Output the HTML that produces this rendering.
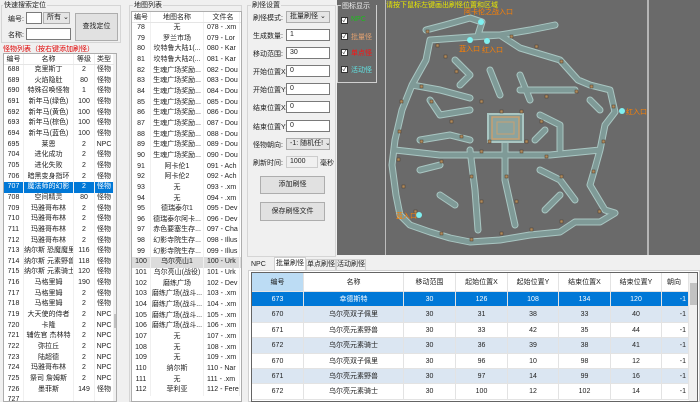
<!DOCTYPE html>
<html><head><meta charset="utf-8">
<style>
*{box-sizing:border-box;margin:0;padding:0}
body{width:700px;height:402px;overflow:hidden;background:#f0f0f0;font-family:"Liberation Sans","Noto Sans CJK SC",sans-serif;font-size:7px;color:#222;position:relative}
.a{position:absolute;white-space:nowrap}
.in{position:absolute;background:#fff;border:1px solid #7a7a7a;font-size:7px;padding:0 3px;line-height:10px;overflow:hidden;white-space:nowrap}
.sel{position:absolute;background:#e5e5e5;border:1px solid #adadad;font-size:7px;padding:0 3px;line-height:10px;overflow:hidden;white-space:nowrap}
.btn{position:absolute;background:#e1e1e1;border:1px solid #adadad;text-align:center;font-size:7px}
.grp{position:absolute;border:1px solid #d5d5d5}
.gt{position:absolute;background:#f0f0f0;padding:0 1px;font-size:7px;line-height:9px}
.r{display:flex;height:10.67px;line-height:10.67px;overflow:hidden}
.r span{display:block;text-align:center;white-space:nowrap;overflow:hidden;border-right:1px solid #f0f0f0;flex:none}
.h{height:11px;line-height:11px;border-bottom:1px solid #e5e5e5}
.s{background:#0078d7;color:#fff}
.g{background:#dcdcdc}
.L span:nth-child(1){width:20px}.L span:nth-child(2){width:50px}.L span:nth-child(3){width:21px}.L span:nth-child(4){width:19px}
.M span:nth-child(1){width:19px}.M span:nth-child(2){width:53px}.M span:nth-child(3){width:36px;text-align:left;padding-left:3px}
.B .r{height:15.4px;line-height:15.4px;border-bottom:1px solid #e3e3e3}
.B .r span{border-right:1px solid #e3e3e3}
.B .o{background:#dbe6f2}
.B span:nth-child(1){width:52px}.B span:nth-child(2){width:100px}.B span:nth-child(3){width:52px}.B span:nth-child(4){width:52px}.B span:nth-child(5){width:51px}.B span:nth-child(6){width:52px}.B span:nth-child(7){width:51px}.B span:nth-child(8){width:27px;text-align:right;padding-right:2px}
.cb{position:absolute;width:7px;height:7px;background:#fff;border:1px solid #333;font-size:6px;line-height:6px;text-align:center;color:#111}
</style></head><body>

<div class="grp" style="left:1px;top:5px;width:120px;height:38px"></div>
<div class="gt" style="left:3px;top:1px">快速搜索定位</div>
<div class="a" style="left:8px;top:14px">编号:</div>
<div class="in" style="left:26px;top:12px;width:16px;height:12px"></div>
<div class="sel" style="left:43px;top:12px;width:27px;height:12px">所有 ⌄</div>
<div class="a" style="left:8px;top:30px">名称:</div>
<div class="in" style="left:26px;top:28px;width:45px;height:12px"></div>
<div class="btn" style="left:75px;top:13px;width:43px;height:28px;line-height:26px">查找定位</div>
<div class="a" style="left:3px;top:44px;color:#e00000">怪物列表（按右键添加刷怪）</div>
<div class="a L" style="left:3px;top:53px;width:114px;height:349px;background:#fff;border:1px solid #adadad;overflow:hidden">
<div class="r h"><span>编号</span><span>名称</span><span>等级</span><span>类型</span></div>
<div class="r"><span>688</span><span>克里斯丁</span><span>2</span><span>怪物</span></div>
<div class="r"><span>689</span><span>火焰隐肚</span><span>80</span><span>怪物</span></div>
<div class="r"><span>690</span><span>特殊召唤怪物</span><span>1</span><span>怪物</span></div>
<div class="r"><span>691</span><span>新年马(绿色)</span><span>100</span><span>怪物</span></div>
<div class="r"><span>692</span><span>新年马(黄色)</span><span>100</span><span>怪物</span></div>
<div class="r"><span>693</span><span>新年马(棕色)</span><span>100</span><span>怪物</span></div>
<div class="r"><span>694</span><span>新年马(蓝色)</span><span>100</span><span>怪物</span></div>
<div class="r"><span>695</span><span>莱恩</span><span>2</span><span>NPC</span></div>
<div class="r"><span>704</span><span>进化成功</span><span>2</span><span>怪物</span></div>
<div class="r"><span>705</span><span>进化失败</span><span>2</span><span>怪物</span></div>
<div class="r"><span>706</span><span>暗黑变身指环</span><span>2</span><span>怪物</span></div>
<div class="r s"><span>707</span><span>魔法师的幻影</span><span>2</span><span>怪物</span></div>
<div class="r"><span>708</span><span>空间精灵</span><span>80</span><span>怪物</span></div>
<div class="r"><span>709</span><span>玛雅哥布林</span><span>2</span><span>怪物</span></div>
<div class="r"><span>710</span><span>玛雅哥布林</span><span>2</span><span>怪物</span></div>
<div class="r"><span>711</span><span>玛雅哥布林</span><span>2</span><span>怪物</span></div>
<div class="r"><span>712</span><span>玛雅哥布林</span><span>2</span><span>怪物</span></div>
<div class="r"><span>713</span><span>纳尔斯 恐魔魔里</span><span>116</span><span>怪物</span></div>
<div class="r"><span>714</span><span>纳尔斯 元素野兽</span><span>118</span><span>怪物</span></div>
<div class="r"><span>715</span><span>纳尔斯 元素骑士</span><span>120</span><span>怪物</span></div>
<div class="r"><span>716</span><span>马格里姆</span><span>190</span><span>怪物</span></div>
<div class="r"><span>717</span><span>马格里姆</span><span>2</span><span>怪物</span></div>
<div class="r"><span>718</span><span>马格里姆</span><span>2</span><span>怪物</span></div>
<div class="r"><span>719</span><span>大天使的侍者</span><span>2</span><span>NPC</span></div>
<div class="r"><span>720</span><span>卡隆</span><span>2</span><span>NPC</span></div>
<div class="r"><span>721</span><span>辅佐官 杰林特</span><span>2</span><span>NPC</span></div>
<div class="r"><span>722</span><span>弥拉丘</span><span>2</span><span>NPC</span></div>
<div class="r"><span>723</span><span>陆超德</span><span>2</span><span>NPC</span></div>
<div class="r"><span>724</span><span>玛雅哥布林</span><span>2</span><span>NPC</span></div>
<div class="r"><span>725</span><span>祭司 詹姆斯</span><span>2</span><span>NPC</span></div>
<div class="r"><span>726</span><span>墨菲斯</span><span>149</span><span>怪物</span></div>
<div class="r"><span>727</span><span></span><span></span><span></span></div>
<div class="a" style="left:110px;top:0;width:4px;height:349px;background:#f0f0f0"></div>
<div class="a" style="left:110px;top:260px;width:4px;height:14px;background:#c2c2c2"></div>
</div>

<div class="grp" style="left:129px;top:5px;width:113px;height:397px"></div>
<div class="gt" style="left:133px;top:1px">地图列表</div>
<div class="a M" style="left:131px;top:11px;width:111px;height:391px;background:#fff;border:1px solid #adadad;overflow:hidden">
<div class="r h"><span>编号</span><span>地图名称</span><span style="text-align:center">文件名</span></div>
<div class="r"><span>78</span><span>无</span><span>078 - .xm</span></div>
<div class="r"><span>79</span><span>罗兰市场</span><span>079 - Lor</span></div>
<div class="r"><span>80</span><span>坎特鲁大陆1(...</span><span>080 - Kar</span></div>
<div class="r"><span>81</span><span>坎特鲁大陆2(...</span><span>081 - Kar</span></div>
<div class="r"><span>82</span><span>生魂广场奖励...</span><span>082 - Dou</span></div>
<div class="r"><span>83</span><span>生魂广场奖励...</span><span>083 - Dou</span></div>
<div class="r"><span>84</span><span>生魂广场奖励...</span><span>084 - Dou</span></div>
<div class="r"><span>85</span><span>生魂广场奖励...</span><span>085 - Dou</span></div>
<div class="r"><span>86</span><span>生魂广场奖励...</span><span>086 - Dou</span></div>
<div class="r"><span>87</span><span>生魂广场奖励...</span><span>087 - Dou</span></div>
<div class="r"><span>88</span><span>生魂广场奖励...</span><span>088 - Dou</span></div>
<div class="r"><span>89</span><span>生魂广场奖励...</span><span>089 - Dou</span></div>
<div class="r"><span>90</span><span>生魂广场奖励...</span><span>090 - Dou</span></div>
<div class="r"><span>91</span><span>阿卡伦1</span><span>091 - Ach</span></div>
<div class="r"><span>92</span><span>阿卡伦2</span><span>092 - Ach</span></div>
<div class="r"><span>93</span><span>无</span><span>093 - .xm</span></div>
<div class="r"><span>94</span><span>无</span><span>094 - .xm</span></div>
<div class="r"><span>95</span><span>德瑞泰尔1</span><span>095 - Dev</span></div>
<div class="r"><span>96</span><span>德瑞泰尔阿卡...</span><span>096 - Dev</span></div>
<div class="r"><span>97</span><span>赤色要塞生存...</span><span>097 - Cha</span></div>
<div class="r"><span>98</span><span>幻影寺院生存...</span><span>098 - Illus</span></div>
<div class="r"><span>99</span><span>幻影寺院生存...</span><span>099 - Illus</span></div>
<div class="r g"><span>100</span><span>乌尔亮山1</span><span>100 - Urk</span></div>
<div class="r"><span>101</span><span>乌尔亮山(战役)</span><span>101 - Urk</span></div>
<div class="r"><span>102</span><span>磨练广场</span><span>102 - Dev</span></div>
<div class="r"><span>103</span><span>磨练广场(战斗...</span><span>103 - .xm</span></div>
<div class="r"><span>104</span><span>磨练广场(战斗...</span><span>104 - .xm</span></div>
<div class="r"><span>105</span><span>磨练广场(战斗...</span><span>105 - .xm</span></div>
<div class="r"><span>106</span><span>磨练广场(战斗...</span><span>106 - .xm</span></div>
<div class="r"><span>107</span><span>无</span><span>107 - .xm</span></div>
<div class="r"><span>108</span><span>无</span><span>108 - .xm</span></div>
<div class="r"><span>109</span><span>无</span><span>109 - .xm</span></div>
<div class="r"><span>110</span><span>纳尔斯</span><span>110 - Nar</span></div>
<div class="r"><span>111</span><span>无</span><span>111 - .xm</span></div>
<div class="r"><span>112</span><span>菲利亚</span><span>112 - Fere</span></div>
</div>

<div class="grp" style="left:247px;top:5px;width:89px;height:252px"></div>
<div class="gt" style="left:251px;top:1px">刷怪设置</div>
<div class="a" style="left:253px;top:13px">刷怪模式:</div><div class="sel" style="left:286px;top:11px;width:44px;height:12px">批量刷怪 ⌄</div>
<div class="a" style="left:253px;top:31px">生成数量:</div><div class="in" style="left:286px;top:29px;width:44px;height:12px">1</div>
<div class="a" style="left:253px;top:49px">移动范围:</div><div class="in" style="left:286px;top:47px;width:44px;height:12px">30</div>
<div class="a" style="left:253px;top:67px">开始位置X:</div><div class="in" style="left:286px;top:65px;width:44px;height:12px">0</div>
<div class="a" style="left:253px;top:85px">开始位置Y:</div><div class="in" style="left:286px;top:83px;width:44px;height:12px">0</div>
<div class="a" style="left:253px;top:103px">结束位置X:</div><div class="in" style="left:286px;top:101px;width:44px;height:12px">0</div>
<div class="a" style="left:253px;top:122px">结束位置Y:</div><div class="in" style="left:286px;top:120px;width:44px;height:12px">0</div>
<div class="a" style="left:253px;top:140px">怪物朝向:</div><div class="sel" style="left:286px;top:138px;width:44px;height:12px">-1: 随机任! ⌄</div>
<div class="a" style="left:253px;top:158px">刷新时间:</div><div class="in" style="left:286px;top:156px;width:32px;height:12px;background:#f0f0f0;border-color:#ccc">1000</div><div class="a" style="left:320px;top:158px">毫秒</div>
<div class="btn" style="left:260px;top:176px;width:65px;height:18px;line-height:16px">添加刷怪</div>
<div class="btn" style="left:260px;top:202px;width:65px;height:19px;line-height:17px">保存刷怪文件</div>

<div class="a" style="left:337px;top:0;width:363px;height:255px;background:#6a6a6a"></div>
<div class="a" style="left:337px;top:5px;width:40px;height:78px;border:1px solid #d0d0d0;border-top:none"></div>
<div class="a" style="left:337px;top:5px;width:4px;height:1px;background:#d0d0d0"></div>
<div class="a" style="left:342px;top:1px;color:#eee">图标显示</div>
<div class="cb" style="left:341px;top:17px">✓</div><div class="a" style="left:351px;top:16px;color:#19c019">NPC</div>
<div class="cb" style="left:341px;top:33px">✓</div><div class="a" style="left:351px;top:32px;color:#e0a070">批量怪</div>
<div class="cb" style="left:341px;top:49px">✓</div><div class="a" style="left:351px;top:48px;color:#ff1010">单点怪</div>
<div class="cb" style="left:341px;top:66px">✓</div><div class="a" style="left:351px;top:65px;color:#60e0e0">活动怪</div>
<div class="a" style="left:385px;top:0;width:1px;height:255px;background:#bdbdbd"></div>
<div class="a" style="left:647px;top:0;width:2px;height:255px;background:#b5b5b5"></div>
<div class="a" style="left:386px;top:0;color:#e8e800;font-size:7px">请按下鼠标左键画出刷怪位置和区域</div>
<svg class="a" style="left:0;top:0" width="700" height="255">
<defs>
<path id="p" d="M426 30 L445 25 L470 18 L482 22 L478 35 L500 35 L530 30 L555 25 M500 35 L520 48 L560 60 L578 80 L590 85 L610 90 L615 112 L605 125 L600 150 L595 168 L590 185 L605 210 L615 213 L600 222 L575 222 L560 232 L530 235 L500 240 L470 242 L450 238 L430 232 L410 225 L400 215 L396 195 L392 165 L395 140 L402 110 L412 85 L426 60 L430 40 Z M412 85 L440 90 L470 98 M395 150 L440 155 L500 155 L550 155 L600 150 M470 150 L475 190 L478 230 M505 130 L505 180 L515 225 M540 115 L560 125 L560 150 M420 140 L450 135 L470 140 M520 90 L545 90 L575 90 M470 110 L440 115 L430 100 M540 170 L560 180 L575 200 M420 170 L440 165 M490 70 L500 95 M520 75 L530 100 M590 100 L600 110 M455 60 L470 75 L460 85 M545 130 L535 140 M440 195 L455 205 M560 195 L545 210"/>
</defs>
<g fill="none" stroke-linejoin="round" stroke-linecap="round">
<use href="#p" stroke="#a9c6c2" stroke-width="7"/>
<use href="#p" stroke="#7f9a97" stroke-width="5"/>
</g>
<rect x="488" y="114" width="35" height="28" fill="#7f9a97" stroke="#a9c6c2" stroke-width="2"/>
<rect x="492" y="117" width="27" height="22" fill="#8aa39f" stroke="#c8a070" stroke-width="1.5"/>
<rect x="497" y="122" width="17" height="12" fill="none" stroke="#c8a070" stroke-width="1"/>
<g fill="#b08a5c" stroke="#4a3a2a" stroke-width=".5">
<rect x="426" y="30" width="3" height="3"/><rect x="436" y="44" width="3" height="3"/><rect x="444" y="55" width="3" height="3"/><rect x="455" y="70" width="3" height="3"/><rect x="420" y="85" width="3" height="3"/><rect x="400" y="100" width="3" height="3"/><rect x="398" y="130" width="3" height="3"/><rect x="397" y="158" width="3" height="3"/><rect x="402" y="185" width="3" height="3"/><rect x="414" y="210" width="3" height="3"/><rect x="440" y="232" width="3" height="3"/><rect x="470" y="238" width="3" height="3"/><rect x="500" y="232" width="3" height="3"/><rect x="530" y="228" width="3" height="3"/><rect x="560" y="220" width="3" height="3"/><rect x="598" y="210" width="3" height="3"/><rect x="592" y="170" width="3" height="3"/><rect x="602" y="140" width="3" height="3"/><rect x="612" y="105" width="3" height="3"/><rect x="590" y="85" width="3" height="3"/><rect x="560" y="60" width="3" height="3"/><rect x="535" y="45" width="3" height="3"/><rect x="510" y="35" width="3" height="3"/><rect x="450" y="120" width="3" height="3"/><rect x="460" y="135" width="3" height="3"/><rect x="480" y="150" width="3" height="3"/><rect x="520" y="150" width="3" height="3"/><rect x="540" y="120" width="3" height="3"/><rect x="545" y="155" width="3" height="3"/><rect x="470" y="175" width="3" height="3"/><rect x="505" y="175" width="3" height="3"/><rect x="480" y="200" width="3" height="3"/><rect x="515" y="200" width="3" height="3"/><rect x="440" y="160" width="3" height="3"/><rect x="420" y="140" width="3" height="3"/><rect x="560" y="175" width="3" height="3"/><rect x="575" y="90" width="3" height="3"/><rect x="480" y="100" width="3" height="3"/><rect x="500" y="110" width="3" height="3"/><rect x="520" y="110" width="3" height="3"/><rect x="525" y="140" width="3" height="3"/><rect x="488" y="140" width="3" height="3"/><rect x="430" y="100" width="3" height="3"/><rect x="545" y="95" width="3" height="3"/>
</g>
<g fill="#7ff0f0"><circle cx="481" cy="22" r="3"/><circle cx="470" cy="40" r="3"/><circle cx="487" cy="41" r="3"/><circle cx="622" cy="111" r="3"/><circle cx="419" cy="215" r="3"/></g>
<g fill="#ff8000" font-size="7" font-family="Liberation Sans,Noto Sans CJK SC,sans-serif">
<text x="464" y="14">阿卡伦之战入口</text><text x="459" y="51">蓝入口</text><text x="482" y="52">红入口</text><text x="626" y="114">红入口</text><text x="396" y="218">蓝入口</text>
</g>
</svg>

<div class="a" style="left:248px;top:259px;width:24px;height:11px;line-height:11px;padding-left:3px">NPC</div>
<div class="a" style="left:274px;top:257px;width:32px;height:14px;background:#fff;border:1px solid #d0d0d0;border-bottom:none;text-align:center;line-height:12px">批量刷怪</div>
<div class="a" style="left:306px;top:259px;width:30px;height:12px;border:1px solid #d0d0d0;border-bottom:none;text-align:center;line-height:10px">单点刷怪</div>
<div class="a" style="left:336px;top:259px;width:30px;height:12px;border:1px solid #d0d0d0;border-bottom:none;text-align:center;line-height:10px">活动刷怪</div>
<div class="a" style="left:248px;top:270px;width:452px;height:132px;background:#fff;border:1px solid #d0d0d0"></div>
<div class="a B" style="left:251px;top:272px;width:447px;height:130px;background:#fff;border:1px solid #646464;overflow:hidden">
<div class="r" style="height:19px;line-height:19px"><span style="background:#bcdcf4">编号</span><span>名称</span><span>移动范围</span><span>起始位置X</span><span>起始位置Y</span><span>结束位置X</span><span>结束位置Y</span><span style="text-align:center">朝向</span></div>
<div class="r s"><span>673</span><span>幸德斯特</span><span>30</span><span>126</span><span>108</span><span>134</span><span>120</span><span>-1</span></div>
<div class="r o"><span>670</span><span>乌尔亮双子佩里</span><span>30</span><span>31</span><span>38</span><span>33</span><span>40</span><span>-1</span></div>
<div class="r"><span>671</span><span>乌尔亮元素野兽</span><span>30</span><span>33</span><span>42</span><span>35</span><span>44</span><span>-1</span></div>
<div class="r o"><span>672</span><span>乌尔亮元素骑士</span><span>30</span><span>36</span><span>39</span><span>38</span><span>41</span><span>-1</span></div>
<div class="r"><span>670</span><span>乌尔亮双子佩里</span><span>30</span><span>96</span><span>10</span><span>98</span><span>12</span><span>-1</span></div>
<div class="r o"><span>671</span><span>乌尔亮元素野兽</span><span>30</span><span>97</span><span>14</span><span>99</span><span>16</span><span>-1</span></div>
<div class="r"><span>672</span><span>乌尔亮元素骑士</span><span>30</span><span>100</span><span>12</span><span>102</span><span>14</span><span>-1</span></div>
<div class="a" style="left:437px;top:0;width:9px;height:130px;background:#f0f0f0"></div>
<div class="a" style="left:438px;top:10px;width:7px;height:22px;background:#c2c2c2"></div>
</div>
</body></html>
